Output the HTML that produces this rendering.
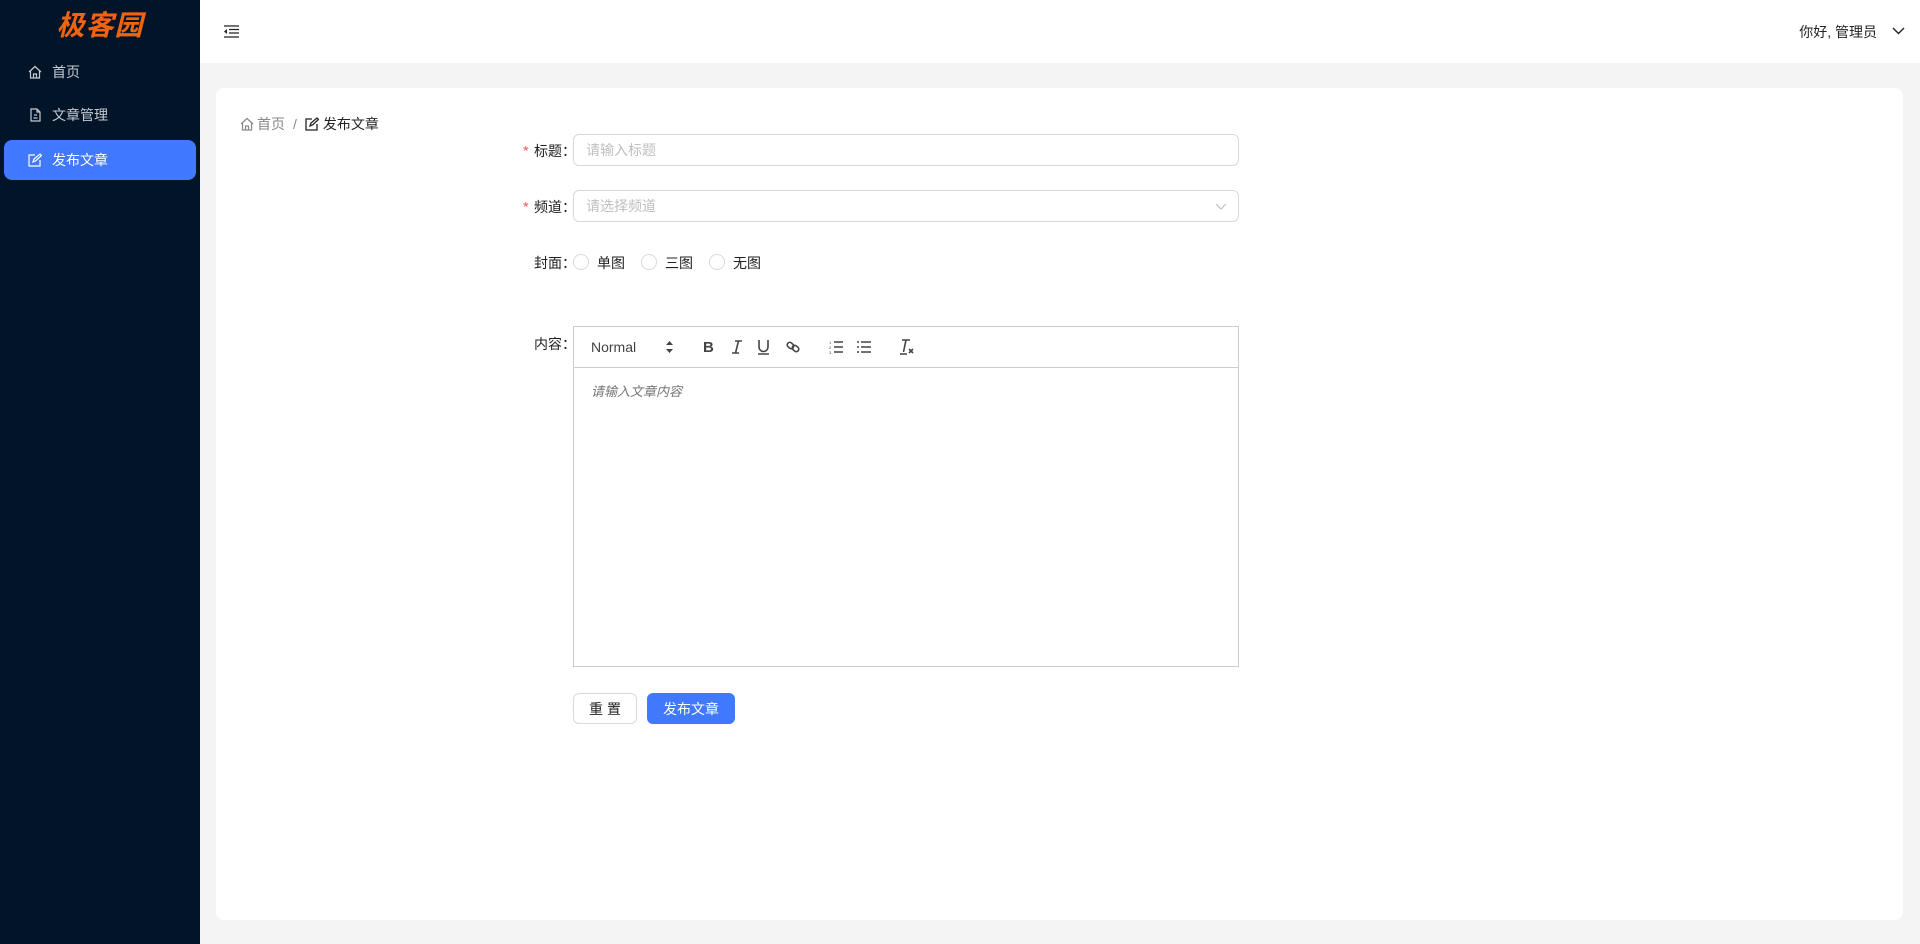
<!DOCTYPE html>
<html><head><meta charset="utf-8"><style>
*{margin:0;padding:0;box-sizing:border-box}
body{width:1920px;height:944px;background:#f4f4f4;font-family:"Liberation Sans","Noto Sans CJK SC",sans-serif;font-size:14px;color:#222;position:relative;overflow:hidden}
.side{position:absolute;left:0;top:0;width:200px;height:944px;background:#021428}
.logo{position:absolute;left:0;width:200px;top:4px;text-align:center;color:#f0640f;font-size:28px;font-weight:bold;font-style:italic;letter-spacing:1px}
.mi{position:absolute;left:4px;width:192px;height:40px;color:#c6cbd3;display:flex;align-items:center;padding-left:24px;font-size:14px}
.mi svg{margin-right:10px}
.mi.act{background:#4078fe;color:#fff;border-radius:8px}
.hdr{position:absolute;left:200px;top:0;right:0;height:63px;background:#fff}
.card{position:absolute;left:216px;top:88px;width:1687px;height:832px;background:#fff;border-radius:8px}
.abs{position:absolute}
.lbl{position:absolute;right:1344px;font-size:14px;color:#222}
.req{color:#ff4d4f;margin-right:4px;font-family:"Liberation Mono",monospace}
.inp{position:absolute;left:573px;width:666px;height:32px;border:1px solid #d9d9d9;border-radius:6px;color:#bfbfbf;padding-left:12px;line-height:30px}
.radio{position:absolute;top:254px;width:16px;height:16px;border:1px solid #d9d9d9;border-radius:50%}
.rt{position:absolute;top:253px;font-size:14px}
.btn{position:absolute;top:693px;height:31px;border-radius:6px;font-size:14px;display:flex;align-items:center;justify-content:center}
</style></head><body>
<div class="side">
<div class="logo">极客园</div>
<div class="mi" style="top:52px"><svg width="14" height="14" viewBox="0 0 14 14" fill="none" stroke="#c6cbd3" stroke-width="1.2"><path d="M1 7L7 1.5 13 7M2.5 5.7V13h9V5.7M5.5 13V9h3v4"/></svg>首页</div>
<div class="mi" style="top:95px"><svg width="14" height="14" viewBox="0 0 14 14" fill="none" stroke="#c6cbd3" stroke-width="1.2"><path d="M3 1h6l3 3v9H3zM9 1v3h3M5.5 10h4M6 7h3"/></svg>文章管理</div>
<div class="mi act" style="top:140px"><svg width="14" height="14" viewBox="0 0 14 14" fill="none" stroke="#fff" stroke-width="1.2"><path d="M12 7v6H1V2h6M5 9l1-3 6-5 1.5 1.5-6 5.5z"/></svg>发布文章</div>
</div>
<div class="hdr">
<svg class="abs" style="left:24px;top:25px" width="15" height="13" viewBox="0 0 15 13" fill="none" stroke="#222" stroke-width="1.3"><path d="M0 1h15M5 4.5h10M5 8h10M0 12h15"/><path d="M3 4v5L0 6.5z" fill="#222" stroke="none"/></svg>
<div class="abs" style="right:43px;top:22px;font-size:14px">你好, 管理员</div>
<svg class="abs" style="right:15px;top:27px" width="13" height="8" viewBox="0 0 13 8" fill="none" stroke="#222" stroke-width="1.4"><path d="M1 1l5.5 5.5L12 1"/></svg>
</div>
<div class="card"></div>
<div class="abs" style="left:240px;top:114px;display:flex;align-items:center;font-size:14px;color:#888">
<svg width="14" height="14" viewBox="0 0 14 14" fill="none" stroke="#888" stroke-width="1.2" style="margin-right:3px"><path d="M1 7L7 1.5 13 7M2.5 5.7V13h9V5.7M5.5 13V9h3v4"/></svg>首页<span style="margin:0 8px">/</span>
<svg width="14" height="14" viewBox="0 0 14 14" fill="none" stroke="#222" stroke-width="1.3" style="margin-right:4px"><path d="M12 7v6H1V2h6M5 9l1-3 6-5 1.5 1.5-6 5.5z"/></svg><span style="color:#222">发布文章</span></div>

<div class="lbl" style="top:141px"><span class="req">*</span>标题：</div>
<div class="inp" style="top:134px">请输入标题</div>
<div class="lbl" style="top:197px"><span class="req">*</span>频道：</div>
<div class="inp" style="top:190px">请选择频道
<svg class="abs" style="right:11px;top:12px" width="12" height="7" viewBox="0 0 12 7" fill="none" stroke="#bfbfbf" stroke-width="1.2"><path d="M1 1l5 5 5-5"/></svg></div>
<div class="lbl" style="top:253px">封面：</div>
<div class="radio" style="left:573px"></div><div class="rt" style="left:597px">单图</div>
<div class="radio" style="left:641px"></div><div class="rt" style="left:665px">三图</div>
<div class="radio" style="left:709px"></div><div class="rt" style="left:733px">无图</div>
<div class="lbl" style="top:334px">内容：</div>
<div class="abs" style="left:573px;top:326px;width:666px;height:341px;border:1px solid #ccc"></div>
<div class="abs" style="left:573px;top:367px;width:666px;height:1px;background:#ccc"></div>
<div class="abs" style="left:591px;top:339px;font-size:14px;color:#444">Normal</div>
<svg class="abs" style="left:666px;top:341px" width="7" height="12" viewBox="0 0 7 12"><path d="M3.5 0L7 4H0zM3.5 12L7 8H0z" fill="#444"/></svg>
<div class="abs" style="left:703px;top:339px;font-size:15px;font-weight:bold;color:#444">B</div>
<svg class="abs" style="left:731px;top:340px" width="12" height="14" viewBox="0 0 12 14" fill="none" stroke="#444" stroke-width="1.6"><path d="M4 1h7M1 13h7M7.5 1L4.5 13"/></svg>
<svg class="abs" style="left:757px;top:340px" width="13" height="15" viewBox="0 0 13 15" fill="none" stroke="#444" stroke-width="1.6"><path d="M2 0v7a4.5 4.5 0 009 0V0M1 14h11"/></svg>
<svg class="abs" style="left:786px;top:340px" width="14" height="14" viewBox="0 0 14 14" fill="none" stroke="#444" stroke-width="1.6"><rect x="1" y="3" width="7" height="5" rx="2.5" transform="rotate(40 4.5 5.5)"/><rect x="6" y="6" width="7" height="5" rx="2.5" transform="rotate(40 9.5 8.5)"/></svg>
<svg class="abs" style="left:829px;top:340px" width="14" height="14" viewBox="0 0 14 14" fill="none" stroke="#444" stroke-width="1.4"><path d="M5 2h9M5 7h9M5 12h9"/><text x="0" y="4" font-size="4" fill="#444" stroke="none">1</text><text x="0" y="9" font-size="4" fill="#444" stroke="none">2</text><text x="0" y="14" font-size="4" fill="#444" stroke="none">3</text></svg>
<svg class="abs" style="left:857px;top:340px" width="14" height="14" viewBox="0 0 14 14" fill="none" stroke="#444" stroke-width="1.4"><path d="M4 2h10M4 7h10M4 12h10M0 2h2M0 7h2M0 12h2"/></svg>
<svg class="abs" style="left:900px;top:339px" width="15" height="16" viewBox="0 0 15 16" fill="none" stroke="#444" stroke-width="1.6"><path d="M2 1h8M6 1L3.5 13M0 15h7M9 10l4 4M13 10l-4 4"/></svg>
<div class="abs" style="left:591px;top:381px;font-size:13px;font-style:italic;color:#777">请输入文章内容</div>
<div class="btn" style="left:573px;width:64px;border:1px solid #d9d9d9;letter-spacing:4px;padding-left:4px">重置</div>
<div class="btn" style="left:647px;width:88px;background:#4078fe;color:#fff">发布文章</div>
</body></html>
